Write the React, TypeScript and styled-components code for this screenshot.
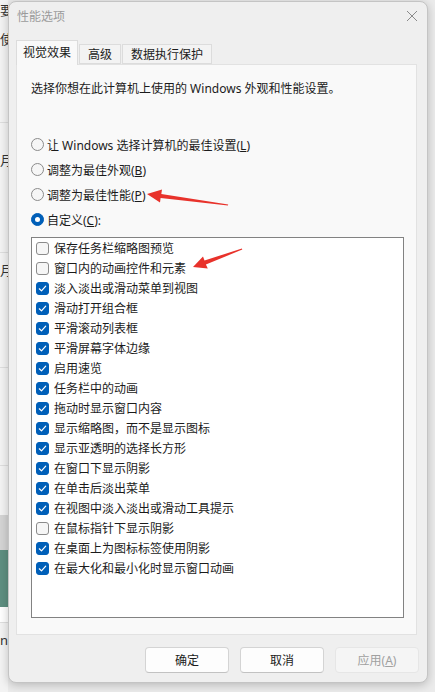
import React from 'react';
import styled, { createGlobalStyle } from 'styled-components';

const GlobalStyle = createGlobalStyle`
  html, body {
    margin: 0;
    padding: 0;
    background: #ebebeb;
  }
  body {
    font-family: "Noto Sans", "Noto Sans CJK SC", sans-serif;
    font-size: 12px;
    color: #1b1b1b;
  }
`;

const Page = styled.div`
  position: relative;
  width: 435px;
  height: 692px;
  display: flex;
  overflow: hidden;
  background: #ebebeb;
`;

/* sliver of the window behind the dialog */
const BackWindow = styled.div`
  width: 8px;
  height: 692px;
  flex-shrink: 0;
  display: flex;
  flex-direction: column;
  background: #f3f3f3;
  overflow: hidden;
`;

const BackText = styled.div<{ $top: number }>`
  margin-top: ${(p) => p.$top}px;
  height: 16px;
  line-height: 16px;
  font-size: 13px;
  white-space: nowrap;
  color: #333;
`;

const BackRule = styled.div<{ $top: number }>`
  margin-top: ${(p) => p.$top}px;
  height: 1px;
  background: #dedede;
`;

const BackBlock = styled.div<{ $h: number; $bg: string; $top?: number }>`
  margin-top: ${(p) => p.$top ?? 0}px;
  height: ${(p) => p.$h}px;
  background: ${(p) => p.$bg};
`;

const Dialog = styled.div`
  width: 418px;
  height: 680px;
  margin-top: 1px;
  flex-shrink: 0;
  display: flex;
  flex-direction: column;
  background: #efefef;
  border: 1px solid #c4c4c4;
  border-radius: 8px;
  box-shadow: 0 2px 10px rgba(0, 0, 0, 0.22);
`;

const TitleBar = styled.div`
  height: 38px;
  display: flex;
  justify-content: space-between;
  align-items: flex-start;
  padding: 7px 9px 0 8px;
  box-sizing: border-box;
`;

const Title = styled.div`
  font-size: 12px;
  line-height: 16px;
  color: #9b9b9b;
`;

const CloseButton = styled.div`
  width: 12px;
  height: 12px;
  margin-top: 1px;
  display: flex;
`;

const TabRow = styled.div`
  height: 24px;
  display: flex;
  align-items: flex-end;
  padding-left: 7px;
  position: relative;
  z-index: 1;
`;

const Tab = styled.div<{ $active?: boolean }>`
  height: ${(p) => (p.$active ? 25 : 20)}px;
  margin-bottom: ${(p) => (p.$active ? -1 : 0)}px;
  margin-right: 1px;
  padding: ${(p) => (p.$active ? '3px 6px 0' : '1px 8px 0')};
  box-sizing: border-box;
  background: ${(p) => (p.$active ? '#f9f9f9' : '#f3f3f3')};
  border: 1px solid #dcdcdc;
  border-bottom: ${(p) => (p.$active ? 'none' : '1px solid #dcdcdc')};
  font-size: 12px;
  line-height: 17px;
  color: #1b1b1b;
`;

const Panel = styled.div`
  height: 571px;
  margin: 0 10px 0 7px;
  box-sizing: border-box;
  border: 1px solid #e2e2e2;
  background: #f9f9f9;
  padding: 15px 12px 0 14px;
  display: flex;
  flex-direction: column;
`;

const Description = styled.div`
  line-height: 18px;
  margin-bottom: 34px;
`;

const RadioRow = styled.div`
  height: 25px;
  display: flex;
  align-items: center;
  gap: 3px;
  white-space: nowrap;
`;

const RadioCircle = styled.span<{ $checked?: boolean }>`
  width: 13px;
  height: 13px;
  box-sizing: border-box;
  border-radius: 50%;
  flex-shrink: 0;
  display: flex;
  align-items: center;
  justify-content: center;
  background: ${(p) => (p.$checked ? '#005fb8' : '#f6f6f6')};
  border: 1px solid ${(p) => (p.$checked ? '#005fb8' : '#8b8b8b')};
  &::after {
    content: '';
    display: ${(p) => (p.$checked ? 'block' : 'none')};
    width: 5px;
    height: 5px;
    border-radius: 50%;
    background: #fff;
  }
`;

const ListBox = styled.div`
  height: 381px;
  margin-top: 5px;
  box-sizing: border-box;
  border: 1px solid #828282;
  background: #fff;
  padding: 0 0 0 4px;
`;

const CheckRow = styled.div`
  height: 20px;
  display: flex;
  align-items: center;
  gap: 5px;
  white-space: nowrap;
`;

const Box = styled.span<{ $checked?: boolean }>`
  width: 13px;
  height: 13px;
  box-sizing: border-box;
  border-radius: 3px;
  flex-shrink: 0;
  display: flex;
  align-items: center;
  justify-content: center;
  background: ${(p) => (p.$checked ? '#005fb8' : '#f6f6f6')};
  border: 1px solid ${(p) => (p.$checked ? '#005fb8' : '#8b8b8b')};
`;

const Footer = styled.div`
  flex: 1;
  display: flex;
  justify-content: flex-end;
  align-items: flex-start;
  gap: 11px;
  padding: 12px 8px 0 0;
`;

const Button = styled.div<{ $disabled?: boolean }>`
  width: 84px;
  height: 26px;
  box-sizing: border-box;
  display: flex;
  align-items: center;
  justify-content: center;
  border-radius: 4px;
  font-size: 12px;
  background: ${(p) => (p.$disabled ? '#f5f5f5' : '#fdfdfd')};
  color: ${(p) => (p.$disabled ? '#a0a0a0' : '#1b1b1b')};
  border: 1px solid ${(p) => (p.$disabled ? '#e6e6e6' : '#d4d4d4')};
  border-bottom-color: ${(p) => (p.$disabled ? '#e6e6e6' : '#c2c2c2')};
`;

const Annotations = styled.svg`
  position: absolute;
  left: 0;
  top: 0;
  pointer-events: none;
`;

const options = [
  { label: <>让 Windows 选择计算机的最佳设置(<u>L</u>)</> },
  { label: <>调整为最佳外观(<u>B</u>)</> },
  { label: <>调整为最佳性能(<u>P</u>)</> },
  { label: <>自定义(<u>C</u>):</>, checked: true },
];

const effects: [string, boolean][] = [
  ['保存任务栏缩略图预览', false],
  ['窗口内的动画控件和元素', false],
  ['淡入淡出或滑动菜单到视图', true],
  ['滑动打开组合框', true],
  ['平滑滚动列表框', true],
  ['平滑屏幕字体边缘', true],
  ['启用速览', true],
  ['任务栏中的动画', true],
  ['拖动时显示窗口内容', true],
  ['显示缩略图，而不是显示图标', true],
  ['显示亚透明的选择长方形', true],
  ['在窗口下显示阴影', true],
  ['在单击后淡出菜单', true],
  ['在视图中淡入淡出或滑动工具提示', true],
  ['在鼠标指针下显示阴影', false],
  ['在桌面上为图标标签使用阴影', true],
  ['在最大化和最小化时显示窗口动画', true],
];

function CheckMark() {
  return (
    <svg width="9" height="9" viewBox="0 0 9 9">
      <path d="M1.3 4.8 L3.5 6.9 L7.7 2.2" fill="none" stroke="#fff" strokeWidth="1.2" strokeLinecap="round" strokeLinejoin="round" />
    </svg>
  );
}

function App() {
  return (
    <Page>
      <GlobalStyle />
      <BackWindow>
        <BackText $top={2}>要</BackText>
        <BackText $top={13}>使</BackText>
        <BackRule $top={75} />
        <BackText $top={29}>月</BackText>
        <BackRule $top={84} />
        <BackText $top={9}>月</BackText>
        <BackRule $top={89} />
        <BackRule $top={97} />
        <BackBlock $top={49} $h={35} $bg="#d4d4d4" />
        <BackBlock $h={57} $bg="#5e8f80" />
        <BackBlock $h={15} $bg="#ffffff" />
        <BackRule $top={0} />
        <BackText $top={9}>na</BackText>
      </BackWindow>

      <Dialog>
        <TitleBar>
          <Title>性能选项</Title>
          <CloseButton>
            <svg width="12" height="12" viewBox="0 0 12 12">
              <path d="M1 1 L11 11 M11 1 L1 11" stroke="#8a8a8a" strokeWidth="1" />
            </svg>
          </CloseButton>
        </TitleBar>

        <TabRow>
          <Tab $active>视觉效果</Tab>
          <Tab>高级</Tab>
          <Tab>数据执行保护</Tab>
        </TabRow>

        <Panel>
          <Description>选择你想在此计算机上使用的 Windows 外观和性能设置。</Description>
          {options.map((o, i) => (
            <RadioRow key={i}>
              <RadioCircle $checked={o.checked} />
              <span>{o.label}</span>
            </RadioRow>
          ))}
          <ListBox>
            {effects.map(([label, checked]) => (
              <CheckRow key={label}>
                <Box $checked={checked}>{checked && <CheckMark />}</Box>
                <span>{label}</span>
              </CheckRow>
            ))}
          </ListBox>
        </Panel>

        <Footer>
          <Button>确定</Button>
          <Button>取消</Button>
          <Button $disabled>应用(<u>A</u>)</Button>
        </Footer>
      </Dialog>

      <Annotations width="435" height="692" viewBox="0 0 435 692">
        <polygon
          points="147,194 162,189.5 161.3,193.9 228.2,204.4 227.9,205.6 160.6,197.9 160,202.5"
          fill="#e8322b"
        />
        <polygon
          points="193,267 203,256.5 204.5,260.6 241.9,248.4 242.3,249.6 205.9,264.4 207.8,268.6"
          fill="#e8322b"
        />
      </Annotations>
    </Page>
  );
}

export default App;
